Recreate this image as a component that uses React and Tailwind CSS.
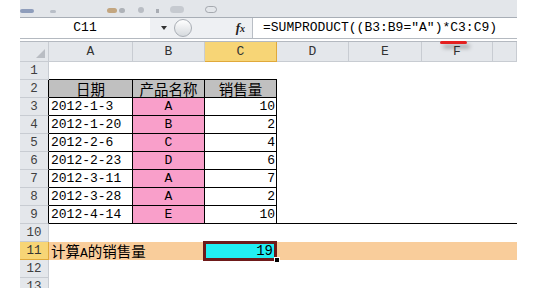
import React from "react";

const CELL_FONT = { fontFamily: '"Liberation Mono", "Noto Sans CJK SC", monospace' };
const CJK_FONT = { fontFamily: '"Noto Sans CJK SC", sans-serif' };

const rows = [
  { n: 1 },
  { n: 2, a: "日期", b: "产品名称", c: "销售量", head: true },
  { n: 3, a: "2012-1-3", b: "A", c: "10" },
  { n: 4, a: "2012-1-20", b: "B", c: "2" },
  { n: 5, a: "2012-2-6", b: "C", c: "4" },
  { n: 6, a: "2012-2-23", b: "D", c: "6" },
  { n: 7, a: "2012-3-11", b: "A", c: "7" },
  { n: 8, a: "2012-3-28", b: "A", c: "2" },
  { n: 9, a: "2012-4-14", b: "E", c: "10" },
  { n: 10 },
  { n: 11, total: true },
  { n: 12 },
  { n: 13 },
];

const colHeads = ["A", "B", "C", "D", "E", "F", ""];

// row number cell on the left
const RowHead = ({ n }) => {
  const inTable = n >= 2 && n <= 9;
  const active = n === 11;
  return (
    <div
      className={
        active
          ? "h-[18px] bg-[#f7d576] border-b border-r border-[#e0a93a] text-[#333] text-[12.5px] leading-[18px] text-center"
          : inTable
          ? "h-[18px] bg-[#e4e7eb] border-b border-[#c8ccd2] border-r border-r-black text-[#3f3f3f] text-[12.5px] leading-[18px] text-center"
          : "h-[18px] bg-[#e4e7eb] border-b border-r border-[#c8ccd2] text-[#3f3f3f] text-[12.5px] leading-[18px] text-center"
      }
    >
      {n}
    </div>
  );
};

const Cell = ({ className = "", children }) => (
  <div className={"h-[18px] text-[13px] leading-[18px] text-black whitespace-nowrap " + className}>
    {children}
  </div>
);

const Cjk = ({ children }) => (
  <span style={CJK_FONT} className="text-[14.5px] leading-[18px]">
    {children}
  </span>
);

const Row = ({ r }) => {
  if (r.total) {
    return (
      <>
        <RowHead n={r.n} />
        <Cell className="col-span-2 bg-[#f9cd9b] pl-[2px]">
          <Cjk>计算</Cjk>A<Cjk>的销售量</Cjk>
        </Cell>
        <div className="h-[18px] relative bg-[#f9cd9b]">
          {/* active cell with its dark red border and fill handle */}
          <div className="absolute -left-[2px] -top-[1px] w-[74px] h-[20px] border-[3px] border-[#6e1a1a] bg-[#22eef2] text-right pr-[1px] text-[14px] leading-[15px] text-black">
            19
          </div>
          <div className="absolute -right-[3px] -bottom-[3px] w-[6px] h-[6px] bg-black border border-white" />
        </div>
        <Cell className="bg-[#f9cd9b]" />
        <Cell className="bg-[#f9cd9b]" />
        <Cell className="bg-[#f9cd9b]" />
        <Cell className="bg-[#f9cd9b]" />
      </>
    );
  }

  if (r.head) {
    return (
      <>
        <RowHead n={r.n} />
        <Cell className="bg-[#c0c0c0] border-r border-b border-black text-center">
          <Cjk>{r.a}</Cjk>
        </Cell>
        <Cell className="bg-[#c0c0c0] border-r border-b border-black text-center">
          <Cjk>{r.b}</Cjk>
        </Cell>
        <Cell className="bg-[#c0c0c0] border-r border-b border-black text-center">
          <Cjk>{r.c}</Cjk>
        </Cell>
        <Cell />
        <Cell />
        <Cell />
        <Cell />
      </>
    );
  }

  if (r.a) {
    const last = r.n === 9;
    return (
      <>
        <RowHead n={r.n} />
        <Cell className="border-r border-b border-black pl-[2px]">{r.a}</Cell>
        <Cell className="bg-[#f99fca] border-r border-b border-black text-center">{r.b}</Cell>
        <Cell className="border-r border-b border-black text-right pr-[1px]">{r.c}</Cell>
        <Cell className={last ? "border-b border-black" : ""} />
        <Cell className={last ? "border-b border-black" : ""} />
        <Cell className={last ? "border-b border-black" : ""} />
        <Cell className={last ? "border-b border-black" : ""} />
      </>
    );
  }

  // empty rows; row 1 carries the top edge of the table
  const top = r.n === 1;
  return (
    <>
      <RowHead n={r.n} />
      <Cell className={top ? "border-b border-black" : ""} />
      <Cell className={top ? "border-b border-black" : ""} />
      <Cell className={top ? "border-b border-black" : ""} />
      <Cell />
      <Cell />
      <Cell />
      <Cell />
    </>
  );
};

export default function App() {
  return (
    <div className="w-[541px] h-[288px] overflow-hidden bg-white relative" style={CELL_FONT}>
      <div className="ml-[20px] w-[497px]">
        {/* cut-off ribbon icons */}
        <div className="h-[18px] bg-[#e3e6ea] border-b border-[#a8aeb6] flex items-end pb-[4px]">
          <div className="w-[14px] h-[4px] rounded-sm bg-[#6a7ea6] opacity-70" />
          <div className="ml-[16px] w-[6px] h-[3px] rounded-sm bg-[#b8bec7]" />
          <div className="ml-[51px] w-[10px] h-[5px] rounded-sm bg-[#b58a52] opacity-70" />
          <div className="ml-[2px] w-[6px] h-[5px] rounded-sm bg-[#8b8f96] opacity-60" />
          <div className="ml-[13px] w-[6px] h-[6px] rounded-sm bg-[#9ca2aa] opacity-60" />
          <div className="ml-[12px] w-[3px] h-[4px] bg-[#80858d] opacity-60" />
          <div className="ml-[11px] w-[14px] h-[7px] rounded-full bg-[#c6cad0]" />
          <div className="ml-[21px] w-[12px] h-[7px] border border-[#8a8f96] rounded-sm opacity-70" />
        </div>

        {/* name box + formula */}
        <div className="h-[20px] flex bg-[#eef0f3]">
          <div className="w-[130px] bg-white text-center text-[13px] leading-[20px] text-black">C11</div>
          <div className="w-[102px] flex items-center pl-[11px]">
            <div className="w-0 h-0 border-l-[3px] border-r-[3px] border-t-[4px] border-l-transparent border-r-transparent border-t-[#333]" />
            <div className="ml-[7px] w-[18px] h-[18px] rounded-full border border-[#a9aeb5] bg-gradient-to-b from-white to-[#d6dade]" />
            <div
              className="ml-auto mr-[7px] text-[13px] leading-[18px] italic font-bold text-[#222]"
              style={{ fontFamily: '"Liberation Serif", serif' }}
            >
              f<span className="text-[10px]">x</span>
            </div>
          </div>
          <div className="flex-1 bg-white border-l border-[#b9bec5] pl-[10px] text-[13px] leading-[20px] text-black whitespace-nowrap">
            =SUMPRODUCT((B3:B9="A")*C3:C9)
          </div>
        </div>
        <div className="h-[4px] border-t border-b border-[#b4b9c0] bg-white" />

        {/* sheet */}
        <div className="grid grid-cols-[29px_84px_72px_72px_72px_73px_71px_24px]">
          <div className="h-[20px] bg-[#e4e7eb] border-r border-b border-[#c8ccd2] flex items-end justify-end p-[3px]">
            <svg width="9" height="9" viewBox="0 0 9 9">
              <polygon points="9,0 9,9 0,9" fill="#b9bdc3" />
            </svg>
          </div>
          {colHeads.map((h, i) =>
            h === "C" ? (
              <div key={i} className="h-[20px] bg-[#f7d576] border-r border-b border-[#e0a93a] text-center text-[13px] leading-[20px] text-[#333]">
                {h}
              </div>
            ) : (
              <div key={i} className="h-[20px] bg-[#e4e7eb] border-r border-b border-[#c8ccd2] text-center text-[13px] leading-[20px] text-[#333]">
                {h}
              </div>
            )
          )}
          {rows.map((r) => (
            <Row key={r.n} r={r} />
          ))}
        </div>
      </div>

      {/* red annotation stroke drawn over the screenshot */}
      <div className="absolute left-[440px] top-[41px] w-[27px] h-[3px] rounded-full bg-[#e42020] shadow-[3px_4px_4px_rgba(0,0,0,0.35)]" />
    </div>
  );
}
